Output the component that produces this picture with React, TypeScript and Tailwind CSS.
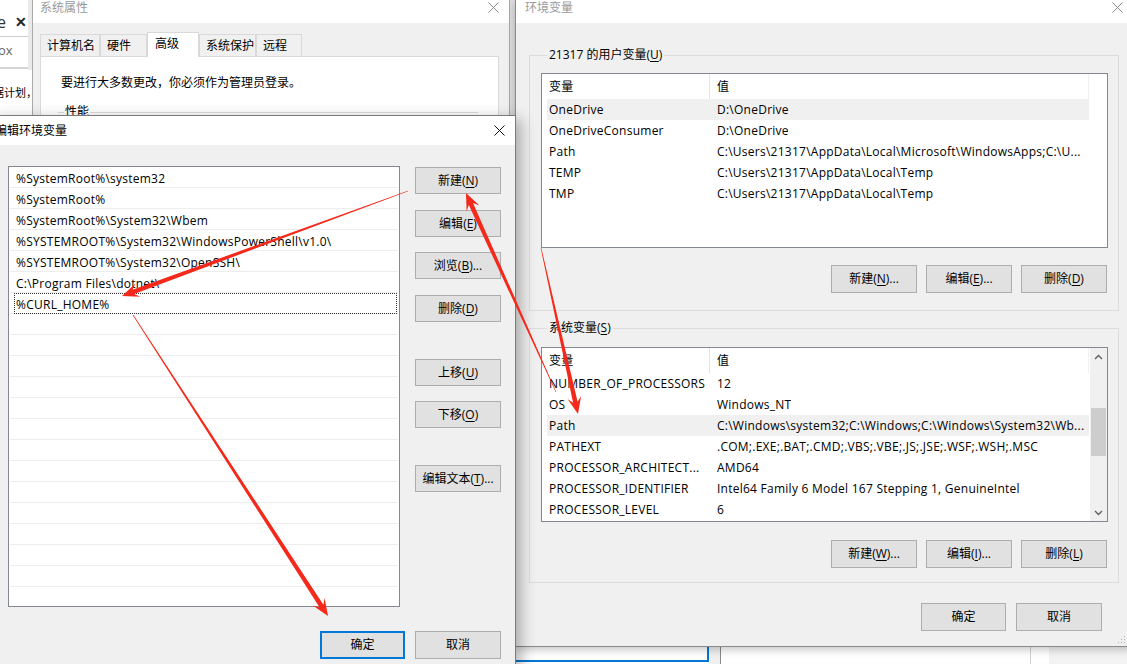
import React from "react";

type Row = [string, string];

const userRows: Row[] = [
  ["OneDrive", "D:\\OneDrive"],
  ["OneDriveConsumer", "D:\\OneDrive"],
  ["Path", "C:\\Users\\21317\\AppData\\Local\\Microsoft\\WindowsApps;C:\\U..."],
  ["TEMP", "C:\\Users\\21317\\AppData\\Local\\Temp"],
  ["TMP", "C:\\Users\\21317\\AppData\\Local\\Temp"],
];

const sysRows: Row[] = [
  ["NUMBER_OF_PROCESSORS", "12"],
  ["OS", "Windows_NT"],
  ["Path", "C:\\Windows\\system32;C:\\Windows;C:\\Windows\\System32\\Wb..."],
  ["PATHEXT", ".COM;.EXE;.BAT;.CMD;.VBS;.VBE;.JS;.JSE;.WSF;.WSH;.MSC"],
  ["PROCESSOR_ARCHITECT...", "AMD64"],
  ["PROCESSOR_IDENTIFIER", "Intel64 Family 6 Model 167 Stepping 1, GenuineIntel"],
  ["PROCESSOR_LEVEL", "6"],
];

const pathEntries = [
  "%SystemRoot%\\system32",
  "%SystemRoot%",
  "%SystemRoot%\\System32\\Wbem",
  "%SYSTEMROOT%\\System32\\WindowsPowerShell\\v1.0\\",
  "%SYSTEMROOT%\\System32\\OpenSSH\\",
  "C:\\Program Files\\dotnet\\",
  "%CURL_HOME%",
];

function CloseX({ color }: { color: string }) {
  return (
    <svg width="11" height="11" viewBox="0 0 11 11">
      <path d="M0.5 0.5L10.5 10.5M10.5 0.5L0.5 10.5" stroke={color} strokeWidth="1" />
    </svg>
  );
}

function Chevron({ up }: { up?: boolean }) {
  return (
    <svg width="9" height="6" viewBox="0 0 9 6">
      <path d={up ? "M1 5L4.5 1.5L8 5" : "M1 1L4.5 4.5L8 1"} fill="none" stroke="#606060" strokeWidth="1.4" />
    </svg>
  );
}

function WinButton({
  label,
  hotkey,
  tail = "",
  focused = false,
  className = "",
}: {
  label: string;
  hotkey?: string;
  tail?: string;
  focused?: boolean;
  className?: string;
}) {
  return (
    <div
      className={`flex items-center justify-center bg-[#e1e1e1] text-[12px] leading-none text-black ${
        focused ? "border-2 border-[#0078d7]" : "border border-[#adadad]"
      } ${className}`}
    >
      <span>{label}</span>
      {hotkey && (
        <>
          <span>(</span>
          <span className="underline underline-offset-2">{hotkey}</span>
          <span>)</span>
        </>
      )}
      {tail && <span>{tail}</span>}
    </div>
  );
}

function ListView({ rows, highlight, scroll }: { rows: Row[]; highlight: number; scroll?: boolean }) {
  return (
    <div className="flex h-[175px] overflow-hidden border border-[#828790] bg-white text-[12px] tracking-[0.25px] text-black">
      <div className="w-[547px] shrink-0">
        <div className="flex h-[25px] items-center border-r border-[#f0f0f0]">
          <div className="flex h-full w-[168px] items-center border-r border-[#e5e5e5] pl-[7px]">变量</div>
          <div className="pl-[7px]">值</div>
        </div>
        {rows.map((r, i) => (
          <div key={r[0]} className={`ml-[5px] flex h-[21px] items-center ${i === highlight ? "bg-[#f0f0f0]" : ""}`}>
            <div className="w-[163px] shrink-0 overflow-hidden whitespace-nowrap pl-[2px]">{r[0]}</div>
            <div className="overflow-hidden whitespace-nowrap pl-[7px]">{r[1]}</div>
          </div>
        ))}
      </div>
      {scroll && (
        <div className="ml-auto flex w-[17px] flex-col bg-[#f0f0f0]">
          <div className="flex h-[17px] items-center justify-center">
            <Chevron up />
          </div>
          <div className="h-[43px]" />
          <div className="mx-[1px] h-[48px] bg-[#cdcdcd]" />
          <div className="flex-1" />
          <div className="flex h-[17px] items-center justify-center">
            <Chevron />
          </div>
        </div>
      )}
    </div>
  );
}

function arrowPoints(x1: number, y1: number, x2: number, y2: number) {
  const dx = x2 - x1;
  const dy = y2 - y1;
  const len = Math.hypot(dx, dy);
  const ux = dx / len;
  const uy = dy / len;
  const nx = -uy;
  const ny = ux;
  const pt = (d: number, w: number) =>
    `${(x2 - ux * d + nx * w).toFixed(1)},${(y2 - uy * d + ny * w).toFixed(1)}`;
  return [
    `${(x1 + nx * 0.3).toFixed(1)},${(y1 + ny * 0.3).toFixed(1)}`,
    pt(12, 2.3),
    pt(17, 7),
    `${x2},${y2}`,
    pt(17, -7),
    pt(12, -2.3),
    `${(x1 - nx * 0.3).toFixed(1)},${(y1 - ny * 0.3).toFixed(1)}`,
  ].join(" ");
}

const arrows: [number, number, number, number][] = [
  [408, 191, 122, 296],
  [541, 248, 578, 414],
  [556, 392, 466, 193],
  [133, 315, 328, 616],
];

function Arrows() {
  return (
    <svg className="pointer-events-none absolute inset-0" width="1127" height="664" viewBox="0 0 1127 664">
      {arrows.map((a, i) => (
        <polygon key={i} points={arrowPoints(a[0], a[1], a[2], a[3])} fill="#f5291b" />
      ))}
    </svg>
  );
}

function BackStrip() {
  return (
    <div className="absolute left-0 top-0 h-[115px] w-[32px] overflow-hidden bg-white">
      <div className="flex h-[36px] items-center pt-[8px]">
        <span className="-ml-[3px] text-[16px] leading-none text-[#333]">e</span>
        <span className="ml-[9px] text-[14px] font-bold leading-none text-[#222]">✕</span>
        <span className="-mt-[9px] ml-[1px] text-[8px] font-bold leading-none text-[#1a73e8]">2</span>
      </div>
      <div className="flex h-[28px] items-center border-t border-[#cccccc] text-[13px] text-[#666]">
        <span className="-ml-[2px]">ox</span>
      </div>
      <div className="mt-[3px] h-[2px] bg-[#d4d4d4]" />
      <div className="mt-[17px] whitespace-nowrap text-[11px] leading-[14px] text-black">
        <span className="-ml-[7px]">据计划，</span>
      </div>
      <div className="absolute right-0 top-0 h-[70px] w-[4px] bg-[#e9e9e9]" />
    </div>
  );
}

function SysProps() {
  const tabs = [
    { t: "计算机名", w: "w-[60px]" },
    { t: "硬件", w: "w-[47px]" },
    { t: "高级", w: "w-[52px]", on: true },
    { t: "系统保护", w: "w-[57px]" },
    { t: "远程", w: "w-[46px]" },
  ];
  return (
    <>
      <div className="absolute left-[510px] top-0 h-[120px] w-[6px] bg-[#dcdcdc]" />
      <div className="absolute left-[32px] top-0 h-[140px] w-[478px] border-l border-r border-[#aaaaaa] bg-[#f0f0f0]">
        <div className="h-[23px] bg-white">
          <div className="flex h-[15px] items-center justify-between pl-[7px] pr-[10px]">
            <span className="text-[12px] leading-none text-[#9a9a9a]">系统属性</span>
            <CloseX color="#8a8a8a" />
          </div>
        </div>
        <div className="pl-[7px] pr-[10px] pt-[9px]">
          <div className="flex h-[24px] items-end">
            {tabs.map((tab) =>
              tab.on ? (
                <div
                  key={tab.t}
                  className={`relative z-10 -mb-px h-[25px] ${tab.w} border border-b-0 border-[#d9d9d9] bg-white pl-[7px] pt-[3px] text-[12px] leading-[16px] text-black`}
                >
                  {tab.t}
                </div>
              ) : (
                <div
                  key={tab.t}
                  className={`h-[22px] ${tab.w} border border-b-0 border-[#d9d9d9] bg-[#f0f0f0] pl-[6px] pt-[3px] text-[12px] leading-[16px] text-black`}
                >
                  {tab.t}
                </div>
              )
            )}
          </div>
          <div className="h-[100px] border border-[#d9d9d9] bg-white pl-[20px] pt-[18px] text-[12px] leading-[16px] text-black">
            <div>要进行大多数更改，你必须作为管理员登录。</div>
            <div className="-ml-[3px] mr-[20px] mt-[13px] flex items-center">
              <span className="w-[6px] border-t border-[#dcdcdc]" />
              <span className="px-[1px]">性能</span>
              <span className="flex-1 border-t border-[#dcdcdc]" />
            </div>
          </div>
        </div>
      </div>
    </>
  );
}

function BottomStrip() {
  return (
    <div className="absolute left-[515px] top-[647px] flex h-[17px] w-[612px]">
      <div className="h-full w-[194px] bg-white">
        <div className="h-[15px] border-b-2 border-r-2 border-[#0078d7]" />
      </div>
      <div className="h-full w-[12px] border-r border-[#8a8a8a] bg-[#f0f0f0]" />
      <div className="h-full w-[310px] border-r border-[#d0d0d0] bg-white" />
      <div className="h-full w-[18px] bg-white" />
      <div className="h-full flex-1 bg-[#f3f3f3]" />
    </div>
  );
}

function EnvVars() {
  return (
    <div className="absolute left-[515px] top-0 h-[647px] w-[617px] border-b border-l border-[#8a8a8a] bg-[#f0f0f0] text-black shadow-[0_3px_8px_rgba(0,0,0,0.22)]">
      <div className="h-[23px] bg-white">
        <div className="flex h-[15px] items-center justify-between pl-[9px] pr-[9px]">
          <span className="text-[12px] leading-none text-[#9a9a9a]">环境变量</span>
          <CloseX color="#8a8a8a" />
        </div>
      </div>
      <div className="px-[13px]">
        <fieldset className="mt-[24px] border border-[#dcdcdc] pb-[17px] pl-[11px] pr-[10px]">
          <legend className="ml-[6px] px-[2px] text-[12px] leading-[16px]">
            21317 的用户变量(<span className="underline underline-offset-2">U</span>)
          </legend>
          <div className="mt-[10px]">
            <ListView rows={userRows} highlight={0} />
          </div>
          <div className="mt-[17px] flex justify-end gap-[9px] pr-[1px]">
            <WinButton label="新建" hotkey="N" tail="..." className="h-[28px] w-[86px]" />
            <WinButton label="编辑" hotkey="E" tail="..." className="h-[28px] w-[86px]" />
            <WinButton label="删除" hotkey="D" className="h-[28px] w-[86px]" />
          </div>
        </fieldset>
        <fieldset className="mt-[9px] border border-[#dcdcdc] pb-[14px] pl-[11px] pr-[10px]">
          <legend className="ml-[6px] px-[2px] text-[12px] leading-[16px]">
            系统变量(<span className="underline underline-offset-2">S</span>)
          </legend>
          <div className="mt-[11px]">
            <ListView rows={sysRows} highlight={2} scroll />
          </div>
          <div className="mt-[18px] flex justify-end gap-[9px] pr-[1px]">
            <WinButton label="新建" hotkey="W" tail="..." className="h-[28px] w-[86px]" />
            <WinButton label="编辑" hotkey="I" tail="..." className="h-[28px] w-[86px]" />
            <WinButton label="删除" hotkey="L" className="h-[28px] w-[86px]" />
          </div>
        </fieldset>
        <div className="mt-[20px] flex justify-end gap-[10px] pr-[17px]">
          <WinButton label="确定" className="h-[28px] w-[85px]" />
          <WinButton label="取消" className="h-[28px] w-[86px]" />
        </div>
      </div>
      <svg className="absolute bottom-[2px] right-[6px]" width="8" height="8" viewBox="0 0 8 8">
        <rect x="6" y="0" width="1" height="1" fill="#b0b0b0" />
        <rect x="3" y="3" width="1" height="1" fill="#b0b0b0" />
        <rect x="6" y="3" width="1" height="1" fill="#b0b0b0" />
        <rect x="0" y="6" width="1" height="1" fill="#b0b0b0" />
        <rect x="3" y="6" width="1" height="1" fill="#b0b0b0" />
        <rect x="6" y="6" width="1" height="1" fill="#b0b0b0" />
      </svg>
    </div>
  );
}

function EditEnv() {
  const rows = Array.from({ length: 21 }, (_, i) => pathEntries[i] ?? "");
  return (
    <div className="absolute left-[-10px] top-[115px] h-[560px] w-[526px] border border-[#7a7a7a] bg-[#f0f0f0] text-black shadow-[5px_4px_14px_rgba(0,0,0,0.3)]">
      <div className="flex h-[29px] items-center justify-between bg-white pl-[4px] pr-[10px]">
        <span className="text-[12px] leading-none">编辑环境变量</span>
        <CloseX color="#111111" />
      </div>
      <div className="flex pl-[17px] pt-[21px]">
        <div className="h-[441px] w-[392px] overflow-hidden border border-[#828790] bg-white text-[12px] tracking-[0.25px]">
          {rows.map((r, i) =>
            i === 6 ? (
              <div key={i} className="mx-[1px] h-[21px] border-b border-[#ededed]">
                <div className="ml-[4px] mr-[1px] flex h-[21px] items-center border border-dotted border-[#333] pl-[1px] pt-[2px]">
                  {r}
                </div>
              </div>
            ) : (
              <div key={i} className="mx-[1px] flex h-[21px] items-center whitespace-nowrap border-b border-[#ededed] pl-[6px] pt-[3px]">
                {r}
              </div>
            )
          )}
        </div>
        <div className="ml-[15px] flex w-[86px] flex-col">
          <WinButton label="新建" hotkey="N" className="mt-[1px] h-[27px] w-[86px]" />
          <WinButton label="编辑" hotkey="E" className="mt-[16px] h-[27px] w-[86px]" />
          <WinButton label="浏览" hotkey="B" tail="..." className="mt-[15px] h-[27px] w-[86px]" />
          <WinButton label="删除" hotkey="D" className="mt-[16px] h-[27px] w-[86px]" />
          <WinButton label="上移" hotkey="U" className="mt-[37px] h-[27px] w-[86px]" />
          <WinButton label="下移" hotkey="O" className="mt-[15px] h-[27px] w-[86px]" />
          <WinButton label="编辑文本" hotkey="T" tail="..." className="mt-[37px] h-[27px] w-[86px]" />
        </div>
      </div>
      <div className="mt-[24px] flex justify-end gap-[10px] pr-[14px]">
        <WinButton label="确定" focused className="h-[28px] w-[85px]" />
        <WinButton label="取消" className="h-[28px] w-[86px]" />
      </div>
    </div>
  );
}

export default function App() {
  return (
    <div className="relative h-[664px] w-[1127px] overflow-hidden bg-white font-['Open_Sans','Noto_Sans_CJK_SC',sans-serif]">
      <BackStrip />
      <SysProps />
      <BottomStrip />
      <EnvVars />
      <EditEnv />
      <Arrows />
    </div>
  );
}
